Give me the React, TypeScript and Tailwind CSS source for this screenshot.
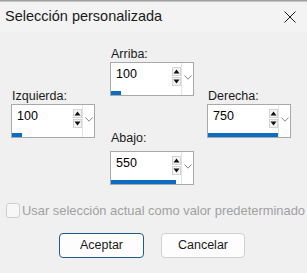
import React from "react";

const font = { fontFamily: '"Liberation Sans", Arial, sans-serif' };

interface SpinProps {
  label: string;
  value: string;
  bar: number;
  gap?: boolean;
}

function SpinBox({ label, value, bar, gap }: SpinProps) {
  return (
    <div className="flex w-[84px] flex-col">
      <div className={`h-[15px] pl-[1px] text-[12.5px] leading-[15px] text-[#1a1a1a] ${gap ? "mb-[5px]" : ""}`}>
        {label}
      </div>
      <div className="flex h-[34px] w-[84px] border border-[#a9a9a9] bg-white">
        <div className="flex flex-1 flex-col">
          <div className="flex flex-1">
            <span className="pl-[5px] pt-[4px] text-[12.5px] leading-[15px] text-black">
              {value}
            </span>
            {/* spin buttons */}
            <div className="ml-auto mt-[4px] flex flex-col gap-[1px]">
              <div className="flex h-[9px] w-[9px] items-center justify-center border border-[#d4d4d4] bg-[#f4f4f4]">
                <svg width="7" height="5" viewBox="0 0 7 5">
                  <path d="M0.5 4.5 L3.5 0.5 L6.5 4.5 Z" fill="#111" />
                </svg>
              </div>
              <div className="flex h-[9px] w-[9px] items-center justify-center border border-[#d4d4d4] bg-[#f4f4f4]">
                <svg width="7" height="5" viewBox="0 0 7 5">
                  <path d="M0.5 0.5 L3.5 4.5 L6.5 0.5 Z" fill="#111" />
                </svg>
              </div>
            </div>
          </div>
          {/* progress bar */}
          <div className="h-[4px]">
            <div className="h-full bg-[#0d6cc4]" style={{ width: bar }} />
          </div>
        </div>
        {/* dropdown chevron */}
        <div className="flex w-[12px] items-start justify-center border-l border-[#e3e3e3] pt-[12px]">
          <svg width="8" height="5" viewBox="0 0 8 5">
            <path d="M0.5 0.5 L4 4.2 L7.5 0.5" fill="none" stroke="#7a7a7a" strokeWidth="0.9" />
          </svg>
        </div>
      </div>
    </div>
  );
}

export default function App() {
  return (
    <div
      className="flex h-[273px] w-[307px] flex-col overflow-hidden bg-[#f0f0f0]"
      style={font}
    >
      {/* window edge */}
      <div className="h-[2px] bg-gradient-to-b from-[#8f8f8f] to-[#d8d8d8]" />

      {/* Title bar */}
      <div className="flex h-[30px] items-center justify-between bg-[#f3f3f3] pl-[5px] pr-[11px]">
        <span className="text-[14.5px] text-[#1a1a1a]">Selección personalizada</span>
        <svg width="12" height="12" viewBox="0 0 12 12">
          <path d="M0.5 0.5 L11.5 11.5 M11.5 0.5 L0.5 11.5" stroke="#1a1a1a" strokeWidth="1" />
        </svg>
      </div>

      {/* Spin boxes */}
      <div className="flex pl-[11px]">
        <div className="pt-[57px]">
          <SpinBox label="Izquierda:" value="100" bar={10} />
        </div>
        <div className="ml-[15px] flex flex-col pt-[15px]">
          <SpinBox label="Arriba:" value="100" bar={10} />
          <div className="mt-[35px]">
            <SpinBox label="Abajo:" value="550" bar={65} gap />
          </div>
        </div>
        <div className="ml-[13px] pt-[57px]">
          <SpinBox label="Derecha:" value="750" bar={70} />
        </div>
      </div>

      {/* Checkbox */}
      <div className="mt-[18px] flex items-center gap-[2px] pl-[6px]">
        <div className="h-[15px] w-[14px] rounded-[3px] border border-[#cfcfcf] bg-[#f7f7f7]" />
        <span className="text-[12.9px] leading-[15px] text-[#a0a0a0]">
          Usar selección actual como valor predeterminado
        </span>
      </div>

      {/* Buttons */}
      <div className="mt-[15px] flex pl-[59px]">
        <button className="h-[25px] w-[85px] rounded-[4px] border border-[#1f5c8c] bg-[#fdfdfd] text-[12.5px] text-[#1a1a1a]">
          Aceptar
        </button>
        <button className="ml-[17px] h-[25px] w-[84px] rounded-[4px] border border-[#d0d0d0] bg-[#fdfdfd] text-[12.5px] text-[#1a1a1a]">
          Cancelar
        </button>
      </div>
    </div>
  );
}
